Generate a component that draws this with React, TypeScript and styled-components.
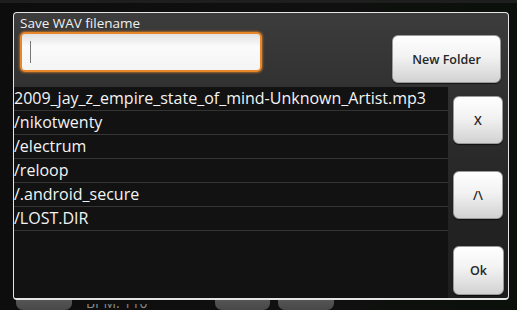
import React from "react";
import styled, { createGlobalStyle } from "styled-components";

const Global = createGlobalStyle`
  html, body { margin: 0; padding: 0; background: #0c0c0c; }
  body { width: 517px; height: 310px; overflow: hidden; font-family: "Open Sans", "Noto Sans", "DejaVu Sans", sans-serif; }
`;

const Screen = styled.div`
  width: 517px;
  height: 310px;
  display: flex;
  flex-direction: column;
  background: linear-gradient(90deg, #0d0d0d 0%, #101010 60%, #0b100b 100%);
  overflow: hidden;
`;

const TopStrip = styled.div`
  height: 3px;
  background: #1e1e1e;
  flex: none;
`;

const Dialog = styled.div`
  margin: 9px 0 0 13px;
  width: 496px;
  height: 288px;
  box-sizing: border-box;
  border: 1px solid #e6e6e6;
  border-bottom-width: 2px;
  border-radius: 4px;
  background: linear-gradient(180deg, #3c3c3c 0%, #303030 30%, #232323 70%, #1e1e1e 100%);
  display: flex;
  flex-direction: column;
  flex: none;
  overflow: hidden;
`;

const Header = styled.div`
  height: 74px;
  display: flex;
  flex: none;
`;

const TitleBlock = styled.div`
  display: flex;
  flex-direction: column;
  padding-left: 6px;
`;

const Title = styled.div`
  color: #f0f0f0;
  font-size: 13.5px;
  line-height: 16px;
  margin-top: 2px;
  height: 17px;
`;

const Input = styled.div`
  width: 242px;
  height: 40px;
  box-sizing: border-box;
  border: 2px solid #e8862a;
  border-radius: 5px;
  box-shadow: 0 0 2px 1px rgba(240, 140, 40, 0.55);
  background: linear-gradient(180deg, #e2e2e2 0%, #fbfbfb 35%, #f4f4f4 100%);
  display: flex;
  align-items: center;
  padding-left: 8px;
`;

const Caret = styled.div`
  width: 1px;
  height: 22px;
  background: #777;
`;

const Button = styled.div<{ $w: number; $h: number }>`
  width: ${(p) => p.$w}px;
  height: ${(p) => p.$h}px;
  box-sizing: border-box;
  border-radius: 6px;
  border: 1px solid #9a9a9a;
  background: linear-gradient(180deg, #ffffff 0%, #f2f2f2 45%, #d2d2d2 100%);
  box-shadow: 0 1px 1px rgba(0, 0, 0, 0.6);
  display: flex;
  align-items: center;
  justify-content: center;
  color: #262626;
  font-size: 12.5px;
  font-weight: 600;
  flex: none;
`;

const HeaderButton = styled(Button)`
  margin: 22px 7px 0 auto;
`;

const Body = styled.div`
  display: flex;
  flex: 1;
  min-height: 0;
`;

const List = styled.div`
  width: 434px;
  background: #121212;
  display: flex;
  flex-direction: column;
  flex: none;
`;

const Row = styled.div`
  height: 24px;
  box-sizing: border-box;
  border-bottom: 1px solid #343434;
  color: #f4f4f4;
  font-size: 16px;
  line-height: 23px;
  white-space: nowrap;
  overflow: hidden;
`;

const Side = styled.div`
  display: flex;
  flex-direction: column;
  gap: 27px;
  padding: 9px 0 0 5px;
`;

const Behind = styled.div`
  height: 10px;
  display: flex;
  align-items: flex-end;
  overflow: hidden;
  flex: none;
`;

const Pill = styled.div<{ $ml: number; $w: number }>`
  margin-left: ${(p) => p.$ml}px;
  width: ${(p) => p.$w}px;
  height: 14px;
  border-radius: 0 0 7px 7px;
  background: linear-gradient(180deg, #5a5a5a, #484848);
  flex: none;
`;

const BehindText = styled.div`
  margin-left: 14px;
  width: 120px;
  color: #8a8a8a;
  font-size: 14px;
  line-height: 14px;
  height: 6px;
  overflow: hidden;
  flex: none;
`;

const BehindTextInner = styled.div`
  margin-top: -8px;
`;

const files = [
  "2009_jay_z_empire_state_of_mind-Unknown_Artist.mp3",
  "/nikotwenty",
  "/electrum",
  "/reloop",
  "/.android_secure",
  "/LOST.DIR",
];

export default function App() {
  return (
    <>
      <Global />
      <Screen>
        <TopStrip />
        <Dialog>
          <Header>
            <TitleBlock>
              <Title>Save WAV filename</Title>
              <Input>
                <Caret />
              </Input>
            </TitleBlock>
            <HeaderButton $w={109} $h={48}>New Folder</HeaderButton>
          </Header>
          <Body>
            <List>
              {files.map((f) => (
                <Row key={f}>{f}</Row>
              ))}
            </List>
            <Side>
              <Button $w={50} $h={48}>X</Button>
              <Button $w={50} $h={48}>/\</Button>
              <Button $w={51} $h={49}>Ok</Button>
            </Side>
          </Body>
        </Dialog>
        <Behind>
          <Pill $ml={16} $w={56} />
          <BehindText>
            <BehindTextInner>BPM: 110</BehindTextInner>
          </BehindText>
          <Pill $ml={9} $w={55} />
          <Pill $ml={8} $w={56} />
        </Behind>
      </Screen>
    </>
  );
}
